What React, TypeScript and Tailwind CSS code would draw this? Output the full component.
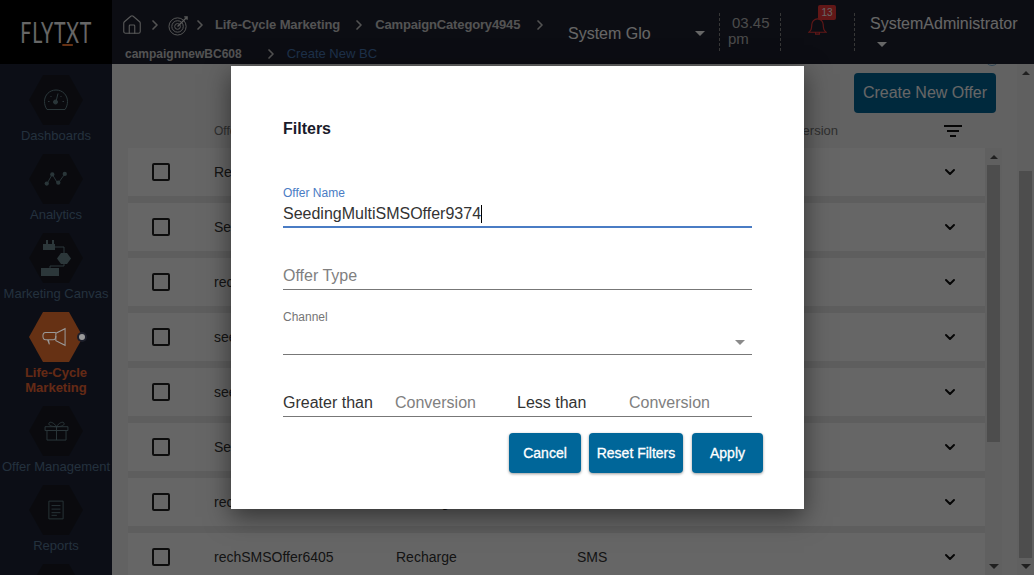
import { ChevronDown, ChevronRight, House } from 'lucide-react';
import type { ReactNode } from 'react';

const font = "font-['Liberation_Sans',Arial,sans-serif]";

function Hex({ active, children }: { active?: boolean; children: ReactNode }) {
  return (
    <div className="relative h-[50px] w-[54px] shrink-0">
      <svg viewBox="0 0 54 50" className="h-[50px] w-[54px]">
        <polygon points="14,0 40,0 54,25 40,50 14,50 0,25" fill={active ? '#ff7a33' : '#191b25'} />
      </svg>
      <div className={`absolute inset-0 flex items-center justify-center ${active ? 'z-30' : ''}`}>{children}</div>
      {active && (
        <div className="absolute right-[-4px] top-[20px] z-30 flex h-[10px] w-[10px] items-center justify-center rounded-full bg-[#1c1e2a]">
          <div className="h-[6px] w-[6px] rounded-full bg-[#9a9a9a]" />
        </div>
      )}
    </div>
  );
}

const iconCls = 'fill-none stroke-[#6a8890] stroke-[1]';

function GaugeIcon() {
  return (
    <svg viewBox="0 0 26 24" className={`h-[24px] w-[26px] ${iconCls}`}>
      <path d="M4 21.500h18c1.500-2 2.500-5 2.500-8 0-6.500-5-11.500-11.500-11.500S1.500 7 1.500 13.500c0 3 1 6 2.500 8z" />
      <path d="M15 5.500l-2 8M5 13.500h1.500M19.500 13.500H21M7.500 8l1 1M18.500 8l-1 1" />
      <circle cx="12.500" cy="14" r="2" fill="#6a8890" />
    </svg>
  );
}

function ChartIcon() {
  return (
    <svg viewBox="0 0 26 16" className="h-[16px] w-[24px]">
      <path d="M3 13.500L9 3l6 10 8-11" fill="none" stroke="#6a8890" strokeWidth="1" />
      <circle cx="3" cy="13" r="2.300" fill="#6a8890" />
      <circle cx="9" cy="3" r="2.300" fill="#6a8890" />
      <circle cx="15.500" cy="12" r="2.300" fill="#6a8890" />
      <circle cx="22.500" cy="2.500" r="2.300" fill="#6a8890" />
    </svg>
  );
}

function CanvasIcon() {
  return (
    <svg viewBox="0 0 30 36" className="h-[36px] w-[30px]">
      <path d="M2 4h3V0h2v4h4V0h2v4h1v6H2z" fill="#6f8a91" />
      <path d="M14 7h9v6M23 22v4H9v2" fill="none" stroke="#6f8a91" strokeWidth="1" />
      <polygon points="20,13 26,13 30,18.500 26,24 20,24 16,18.500" fill="#6f8a91" />
      <rect x="0" y="28" width="18" height="8" fill="#6f8a91" />
    </svg>
  );
}

function MegaphoneIcon() {
  return (
    <svg viewBox="0 0 26 20" className="-ml-[3px] h-[20px] w-[24px] fill-none stroke-[#9a9a9a] stroke-[1.100]">
      <path d="M15 6l10-5v18l-10-5z" />
      <path d="M15 5H4C2 5 1 6.500 1 9s1 4 3 4h2l2 5-1-5h5c2 0 3-2 3-4" />
    </svg>
  );
}

function GiftIcon() {
  return (
    <svg viewBox="0 0 26 21" className={`h-[20px] w-[25px] ${iconCls}`}>
      <path d="M1 6h24v4H1zM3 10h20v10H3zM13 6v14" />
      <path d="M13 6C10 1 5 0 5 3c0 2 4 3 8 3zM13 6c3-5 8-6 8-3 0 2-4 3-8 3z" />
    </svg>
  );
}

function ReportIcon() {
  return (
    <svg viewBox="0 0 18 22" className={`h-[20px] w-[16px] ${iconCls}`}>
      <path d="M1 1h16v20H1zM4 6h10M4 10h10M4 14h10M4 17h6" />
    </svg>
  );
}

function TargetIcon() {
  return (
    <svg viewBox="0 0 22 22" className="h-[21px] w-[21px] fill-none stroke-[#dddddd] stroke-[1]">
      <circle cx="10" cy="12" r="9" />
      <circle cx="10" cy="12" r="6" />
      <circle cx="10" cy="12" r="3" />
      <path d="M10 12L20 2M17 2h3v3" strokeWidth="1.400" />
    </svg>
  );
}

function Caret({ className = 'border-t-white' }: { className?: string }) {
  return <div className={`h-0 w-0 border-x-[5px] border-t-[5px] border-x-transparent ${className}`} />;
}

function Divider() {
  return <div className="h-[38px] w-0 shrink-0 border-l border-dashed border-[#8a8a8a]" />;
}

function SideItem({ label, active, icon, h }: { label: ReactNode; active?: boolean; icon: ReactNode; h: string }) {
  return (
    <div className={`flex shrink-0 flex-col items-center ${h}`}>
      <Hex active={active}>{icon}</Hex>
      <div
        className={`mt-[3px] text-center text-[13px] leading-[15px] whitespace-nowrap ${
          active ? 'font-bold text-[#fa6a35]' : 'text-[#5a7a9a]'
        }`}
      >
        {label}
      </div>
    </div>
  );
}

function Sidebar() {
  return (
    <aside className="flex w-[112px] shrink-0 flex-col items-center overflow-hidden bg-[#1e2438] pt-[11px]">
      <SideItem h="h-[79px]" label="Dashboards" icon={<GaugeIcon />} />
      <SideItem h="h-[79px]" label="Analytics" icon={<ChartIcon />} />
      <SideItem h="h-[79px]" label="Marketing Canvas" icon={<CanvasIcon />} />
      <SideItem
        h="h-[94px]"
        active
        label={
          <>
            Life-Cycle
            <br />
            Marketing
          </>
        }
        icon={<MegaphoneIcon />}
      />
      <SideItem h="h-[79px]" label="Offer Management" icon={<GiftIcon />} />
      <SideItem h="h-[79px]" label="Reports" icon={<ReportIcon />} />
      <Hex>
        <span />
      </Hex>
    </aside>
  );
}

function Crumb() {
  return <ChevronRight size={16} strokeWidth={2.500} className="shrink-0 text-[#cccccc]" />;
}

function Header() {
  return (
    <header className="relative z-10 flex h-16 shrink-0 bg-[#1f2231]">
      <div className="flex w-[112px] shrink-0 items-center justify-center bg-black">
        <span className="relative inline-block scale-x-[0.7] font-['Lato',sans-serif] text-[28px] leading-[32px] font-normal tracking-[1px] whitespace-nowrap text-white">
          FLYTXT
          <span className="absolute bottom-[2px] left-[60px] h-[2px] w-[15px] bg-[#ff7a33]" />
        </span>
      </div>
      <div className="flex w-[444px] shrink-0 flex-col pl-[9px] pt-[14px] whitespace-nowrap">
        <div className="flex h-[22px] items-center">
          <House size={22} strokeWidth={1.200} className="shrink-0 text-[#dddddd]" />
          <span className="ml-[4px]">
            <Crumb />
          </span>
          <span className="ml-[5px]">
            <TargetIcon />
          </span>
          <span className="ml-[3px]">
            <Crumb />
          </span>
          <span className="ml-[7px] text-[13px] font-bold tracking-[-0.1px] text-[#cfcfcf]">Life-Cycle Marketing</span>
          <span className="ml-[11px]">
            <Crumb />
          </span>
          <span className="ml-[8px] text-[13px] font-bold tracking-[-0.15px] text-[#cfcfcf]">CampaignCategory4945</span>
          <span className="ml-[12px]">
            <Crumb />
          </span>
        </div>
        <div className="mt-[8px] flex h-[20px] items-center pl-[4px]">
          <span className="text-[12px] font-bold text-[#cfcfcf]">campaignnewBC608</span>
          <span className="ml-[21px]">
            <Crumb />
          </span>
          <span className="ml-[8px] text-[13px] text-[#4a7ab8]">Create New BC</span>
        </div>
      </div>
      <div className="flex w-[163px] shrink-0 items-center pl-[12px]">
        <span className="mt-[3px] text-[16px] text-white">System Glo</span>
        <span className="ml-[44px] mt-[3px]">
          <Caret />
        </span>
      </div>
      <div className="flex flex-1 items-start pt-[13px]">
        <Divider />
        <div className="mt-[2px] w-[60px] shrink-0 pl-[8px] text-[15px] leading-[16px] text-[#bbbbbb]">
          <div className="pl-[4px]">03.45</div>
          <div>pm</div>
        </div>
        <Divider />
        <div className="relative w-[73px] shrink-0">
          <svg viewBox="0 0 20 20" className="absolute left-[27px] top-[4px] h-[19px] w-[19px] fill-none stroke-[#f03a3a] stroke-[1.200]">
            <path d="M1 16c2-2 3-3 3-8a6 6 0 0112 0c0 5 1 6 3 8zM8 16v2h4v-2" />
          </svg>
          <div className="absolute left-[37px] top-[-8px] flex h-[15px] w-[18px] items-center justify-center rounded-[2px] bg-[#f53a3a] text-[10px] text-white">
            13
          </div>
        </div>
        <Divider />
        <div className="pl-[15px]">
          <div className="text-[16px] leading-[22px] whitespace-nowrap text-white">SystemAdministrator</div>
          <div className="ml-[7px] mt-[7px]">
            <Caret />
          </div>
        </div>
      </div>
    </header>
  );
}

const rows = [
  ['Recharge9281', 'Recharge', 'SMS'],
  ['SeedingSMS4412', 'Seeding', 'SMS'],
  ['rechSMSOffer7720', 'Recharge', 'SMS'],
  ['seedMultiOffer1180', 'Seeding', 'SMS'],
  ['seedSMSOffer5533', 'Seeding', 'SMS'],
  ['SeedingMulti6627', 'Seeding', 'SMS'],
  ['rechSMSOffer3390', 'Recharge', 'SMS'],
  ['rechSMSOffer6405', 'Recharge', 'SMS'],
];

function Row({ cells }: { cells: string[] }) {
  return (
    <div className="flex h-[48px] shrink-0 items-center bg-white text-[14px] text-[#333333]">
      <div className="ml-[24px] h-[18px] w-[18px] shrink-0 rounded-[2px] border-2 border-[#222222]" />
      <div className="ml-[44px] w-[182px] shrink-0">{cells[0]}</div>
      <div className="w-[181px] shrink-0">{cells[1]}</div>
      <div className="w-[360px] shrink-0">{cells[2]}</div>
      <ChevronDown size={16} strokeWidth={3} className="ml-auto mr-[27px] shrink-0 text-[#111111]" />
    </div>
  );
}

function ScrollBar({ thumb }: { thumb: string }) {
  return (
    <div className="flex w-[17px] shrink-0 flex-col items-center bg-[#f1f1f1]">
      <div className="flex h-[17px] shrink-0 items-center justify-center">
        <div className="h-0 w-0 border-x-[4px] border-b-[4px] border-x-transparent border-b-[#505050]" />
      </div>
      <div className="flex-1 self-stretch px-[2px]">
        <div className={`w-full bg-[#c1c1c1] ${thumb}`} />
      </div>
      <div className="flex h-[17px] shrink-0 items-center justify-center">
        <Caret className="border-t-[#505050]" />
      </div>
    </div>
  );
}

function Content() {
  return (
    <main className="flex min-w-0 flex-1 overflow-hidden bg-[#f5f5f5]">
      <div className="flex min-w-0 flex-1 flex-col">
        <div className="relative flex h-[84px] shrink-0 flex-col pr-[21px] pt-[9px]">
          <div className="absolute right-[18px] top-[-12px] h-[14px] w-[14px] rounded-full border border-[#7ab0d8]" />
          <button className="ml-auto h-[40px] w-[142px] rounded-[4px] bg-[#006699] text-[16px] text-white">
            Create New Offer
          </button>
          <div className="relative mt-[9px] flex h-[18px] items-center pl-[102px] pr-[34px] text-[12px] text-[#777777]">
            <span>Offer Name</span>
            <span className="ml-auto mr-[106px] text-[13px]">Conversion</span>
            <svg viewBox="0 0 18 12" className="h-[12px] w-[18px] stroke-[#111111] stroke-2">
              <path d="M0 1h18M3 6h12M6 11h6" />
            </svg>
          </div>
        </div>
        <div className="flex min-h-0 flex-1 pl-[16px] pr-[15px]">
          <div className="flex flex-1 flex-col gap-[7px] overflow-hidden bg-[#ececec]">
            {rows.map(r => (
              <Row key={r[0]} cells={r} />
            ))}
          </div>
          <ScrollBar thumb="h-[277px]" />
        </div>
      </div>
      <ScrollBar thumb="mt-[90px] h-[387px]" />
    </main>
  );
}

function Underline({ color = 'bg-[#777777]', h = 'h-px' }: { color?: string; h?: string }) {
  return <div className={`w-full ${h} ${color}`} />;
}

function Btn({ children, w }: { children: ReactNode; w: string }) {
  return (
    <button className={`h-[40px] ${w} rounded-[4px] bg-[#006699] text-[14px] text-white shadow-[0_1px_3px_rgba(0,0,0,0.4)] [-webkit-text-stroke:0.3px_white]`}>
      {children}
    </button>
  );
}

function FilterModal() {
  return (
    <div className="absolute left-[231px] top-[66px] flex h-[443px] w-[573px] flex-col bg-white pl-[52px] pr-[52px] pt-[55px] shadow-[0_8px_24px_rgba(0,0,0,0.5)]">
      <h2 className="text-[16px] leading-[16px] font-bold text-[#1a1a2a]">Filters</h2>
      <div className="mt-[49px] text-[12px] leading-[14px] text-[#4a7cc4]">Offer Name</div>
      <div className="mt-[4px] flex h-[20px] items-center text-[16px] text-[#333333]">
        SeedingMultiSMSOffer9374
        <span className="inline-block h-[18px] w-px bg-black" />
      </div>
      <div className="mt-[2px]">
        <Underline color="bg-[#4a7cc4]" h="h-[2px]" />
      </div>
      <div className="mt-[38px] h-[20px] text-[16px] leading-[20px] text-[#808080]">Offer Type</div>
      <div className="mt-[3px]">
        <Underline />
      </div>
      <div className="mt-[20px] text-[12px] leading-[14px] text-[#757575]">Channel</div>
      <div className="flex h-[30px] items-center justify-end pr-[7px] pt-[7px]">
        <Caret className="border-t-[#8a8a8a]" />
      </div>
      <Underline />
      <div className="mt-[38px] flex h-[20px] items-center text-[16px]">
        <span className="w-[112px] text-[#333333]">Greater than</span>
        <span className="w-[122px] text-[#808080]">Conversion</span>
        <span className="w-[112px] text-[#333333]">Less than</span>
        <span className="text-[#808080]">Conversion</span>
      </div>
      <div className="mt-[3px]">
        <Underline />
      </div>
      <div className="mr-[-11px] mt-[16px] flex justify-end gap-[8px]">
        <Btn w="w-[72px]">Cancel</Btn>
        <Btn w="w-[94px]">Reset Filters</Btn>
        <div className="ml-px">
          <Btn w="w-[71px]">Apply</Btn>
        </div>
      </div>
    </div>
  );
}

export default function App() {
  return (
    <div className={`relative flex h-screen w-full flex-col overflow-hidden ${font}`}>
      <Header />
      <div className="flex min-h-0 flex-1">
        <Sidebar />
        <Content />
      </div>
      <div className="absolute inset-0 z-20 bg-black/60" />
      <div className="absolute inset-0 z-30">
        <FilterModal />
      </div>
    </div>
  );
}
